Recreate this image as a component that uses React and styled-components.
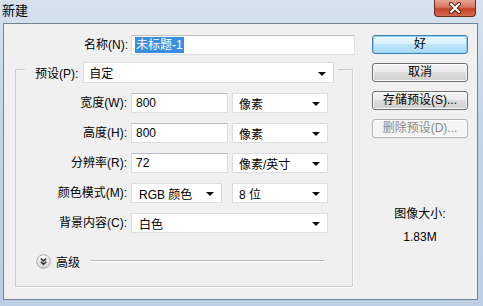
import { createGlobalStyle, styled } from 'styled-components';

const GlobalStyle = createGlobalStyle`
  html, body {
    margin: 0;
    padding: 0;
  }
  body {
    font-family: "Liberation Sans", "Noto Sans CJK SC", sans-serif;
    font-size: 12px;
    color: #000;
    overflow: hidden;
  }
`;

const Window = styled.div`
  width: 483px;
  height: 306px;
  display: flex;
  flex-direction: column;
  background: linear-gradient(180deg, #d6e2ef 0%, #c3d4e7 40%, #bccfe4 100%);
  box-sizing: border-box;
`;

const TitleBar = styled.div`
  height: 23px;
  display: flex;
  justify-content: space-between;
  align-items: flex-start;
  padding-left: 2px;
`;

const Title = styled.div`
  font-size: 13px;
  line-height: 22px;
  color: #000;
`;

const CloseButton = styled.div`
  width: 42px;
  height: 17px;
  margin-right: 7px;
  box-sizing: border-box;
  border: 1px solid #6d2a20;
  border-top: none;
  border-radius: 0 0 4px 4px;
  background: linear-gradient(180deg, #e7a594 0%, #d7765f 45%, #c4432a 55%, #d26a4e 100%);
  display: flex;
  align-items: center;
  justify-content: center;
`;

const Client = styled.div`
  flex: 1;
  margin: 0 5px 6px 3px;
  border: 1px solid #71818f;
  background: #f0f0f0;
  display: flex;
`;

const LeftColumn = styled.div`
  width: 351px;
  padding-top: 11px;
  display: flex;
  flex-direction: column;
`;

const NameRow = styled.div`
  display: flex;
  align-items: center;
  gap: 3px;
  height: 20px;
`;

const Label = styled.div`
  width: ${(p) => p.$w || 111}px;
  text-align: right;
  line-height: 20px;
  white-space: nowrap;
`;

const TextBox = styled.div`
  width: ${(p) => p.$w}px;
  height: 20px;
  box-sizing: border-box;
  background: #fff;
  border: 1px solid #dadde2;
  border-top-color: #b9bcc1;
  padding-left: ${(p) => p.$pad ?? 4}px;
  line-height: 18px;
  white-space: nowrap;
`;

const Selected = styled.span`
  background: #3a8ee0;
  color: #fff;
  padding: 1px 1px;
`;

const Select = styled.div`
  width: ${(p) => p.$w}px;
  height: ${(p) => p.$h || 20}px;
  box-sizing: border-box;
  background: #fff;
  border: 1px solid #dadde2;
  padding: 0 7px 0 ${(p) => p.$pad ?? 6}px;
  display: flex;
  align-items: center;
  justify-content: space-between;
  white-space: nowrap;
`;

const Arrow = styled.span`
  width: 0;
  height: 0;
  border-left: 4px solid transparent;
  border-right: 4px solid transparent;
  border-top: 4px solid #111;
  margin-top: 2px;
`;

const Group = styled.fieldset`
  margin: 1px 0 0 11px;
  width: 338px;
  box-sizing: border-box;
  padding: 0 0 17px 0;
  border: 1px solid #cdcdcd;
  box-shadow: 1px 1px 0 #fff;
  min-inline-size: 0;
`;

const Legend = styled.legend`
  margin-left: 9px;
  padding: 6px 4px 0 10px;
  display: flex;
  align-items: center;
  gap: 5px;
`;

const Fields = styled.div`
  margin-top: 10px;
  display: grid;
  grid-template-columns: 111px 97px 96px;
  grid-auto-rows: 20px;
  column-gap: 4px;
  row-gap: 10px;
`;

const Wide = styled.div`
  grid-column: 2 / span 2;
`;

const Advanced = styled.div`
  margin-top: 20px;
  padding-left: 20px;
  height: 16px;
  display: flex;
  align-items: center;
  gap: 5px;
`;

const Rule = styled.div`
  width: 234px;
  height: 0;
  margin-left: 5px;
  border-top: 1px solid #b9b9b9;
  border-bottom: 1px solid #fff;
`;

const RightColumn = styled.div`
  margin-left: 17px;
  width: 96px;
  padding-top: 11px;
  display: flex;
  flex-direction: column;
  gap: 9px;
`;

const Button = styled.div`
  height: 19px;
  box-sizing: border-box;
  border: 1px solid ${(p) => (p.$default ? '#3c7fb1' : p.$disabled ? '#b0b4b8' : '#707070')};
  border-radius: 3px;
  background: ${(p) =>
    p.$default
      ? 'linear-gradient(180deg, #eaf6fd 0%, #d9f0fc 45%, #bee6fd 50%, #a7d9f5 100%)'
      : p.$disabled
        ? '#f4f4f4'
        : 'linear-gradient(180deg, #f2f2f2 0%, #ebebeb 45%, #dddddd 50%, #cfcfcf 100%)'};
  box-shadow: ${(p) => (p.$default ? 'inset 0 0 0 1px #8fd3f5' : 'inset 0 0 0 1px #fbfbfb')};
  color: ${(p) => (p.$disabled ? '#8a8a8a' : '#000')};
  text-align: center;
  line-height: 17px;
  font-size: 12px;
  white-space: nowrap;
`;

const SizeInfo = styled.div`
  margin-top: 59px;
  display: flex;
  flex-direction: column;
  align-items: center;
  gap: 7px;
  line-height: 16px;
`;

function Expand() {
  return (
    <svg width="15" height="15" viewBox="0 0 15 15">
      <defs>
        <linearGradient id="eg" x1="0" y1="0" x2="0" y2="1">
          <stop offset="0" stopColor="#ffffff" />
          <stop offset="1" stopColor="#d4d4d4" />
        </linearGradient>
      </defs>
      <circle cx="7.5" cy="7.5" r="6.8" fill="url(#eg)" stroke="#a5a5a5" />
      <path d="M4.8 4.6 L7.5 7 L10.2 4.6 M4.8 7.8 L7.5 10.2 L10.2 7.8" fill="none" stroke="#222" strokeWidth="1.4" />
    </svg>
  );
}

function CloseX() {
  return (
    <svg width="14" height="12" viewBox="0 0 14 12">
      <path d="M3 2 L11 10 M11 2 L3 10" stroke="#5a2218" strokeWidth="4" strokeLinecap="round" />
      <path d="M3 2 L11 10 M11 2 L3 10" stroke="#fff" strokeWidth="2" strokeLinecap="round" />
    </svg>
  );
}

function Dropdown({ w, h, pad, children }) {
  return (
    <Select $w={w} $h={h} $pad={pad}>
      <span>{children}</span>
      <Arrow />
    </Select>
  );
}

export default function App() {
  return (
    <>
      <GlobalStyle />
      <Window>
        <TitleBar>
          <Title>新建</Title>
          <CloseButton>
            <CloseX />
          </CloseButton>
        </TitleBar>
        <Client>
          <LeftColumn>
            <NameRow>
              <Label $w={124}>名称(N):</Label>
              <TextBox $w={224} $pad={3}>
                <Selected>未标题-1</Selected>
              </TextBox>
            </NameRow>
            <Group>
              <Legend>
                <span>预设(P):</span>
                <Dropdown w={251} h={21} pad={5}>自定</Dropdown>
              </Legend>
              <Fields>
                <Label>宽度(W):</Label>
                <TextBox $w={97}>800</TextBox>
                <Dropdown w={96}>像素</Dropdown>

                <Label>高度(H):</Label>
                <TextBox $w={97}>800</TextBox>
                <Dropdown w={96}>像素</Dropdown>

                <Label>分辨率(R):</Label>
                <TextBox $w={97}>72</TextBox>
                <Dropdown w={96}>像素/英寸</Dropdown>

                <Label>颜色模式(M):</Label>
                <Dropdown w={91} pad={7}>RGB 颜色</Dropdown>
                <Dropdown w={96}>8 位</Dropdown>

                <Label>背景内容(C):</Label>
                <Wide>
                  <Dropdown w={197} pad={7}>白色</Dropdown>
                </Wide>
              </Fields>
              <Advanced>
                <Expand />
                <span>高级</span>
                <Rule />
              </Advanced>
            </Group>
          </LeftColumn>
          <RightColumn>
            <Button $default>好</Button>
            <Button>取消</Button>
            <Button>存储预设(S)...</Button>
            <Button $disabled>删除预设(D)...</Button>
            <SizeInfo>
              <span>图像大小:</span>
              <span>1.83M</span>
            </SizeInfo>
          </RightColumn>
        </Client>
      </Window>
    </>
  );
}
